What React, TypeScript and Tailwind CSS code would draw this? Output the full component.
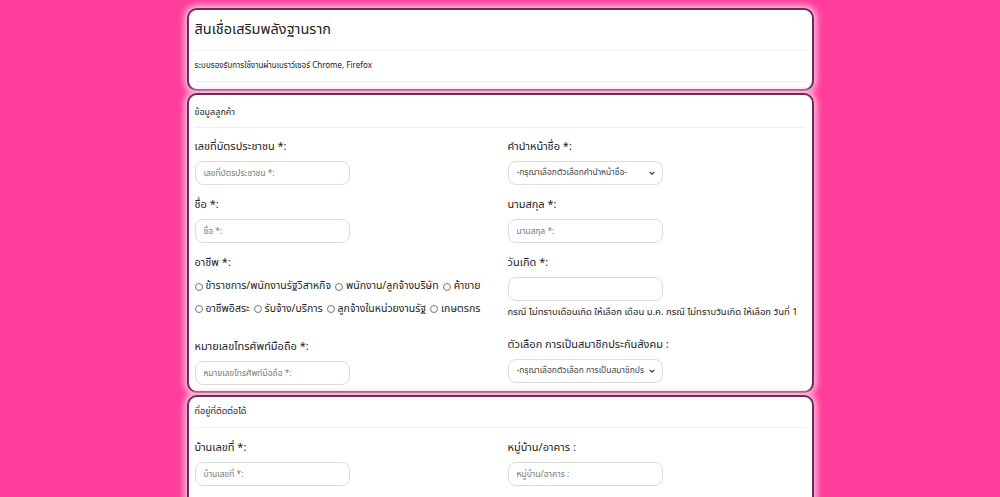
import React from 'react';

const font = { fontFamily: '"Noto Sans Thai", Tahoma, "DejaVu Sans", "Noto Sans", sans-serif' };

const cardCls =
  'bg-white border-2 border-[#6b2d57] rounded-[10px] shadow-[0_0_6px_3px_rgba(255,190,225,0.95)] px-[6px]';

const Hr = () => <div className="h-px bg-[#eeeeee]" />;

const TextField: React.FC<{ label: string; placeholder?: string }> = ({ label, placeholder }) => (
  <div className="flex flex-col">
    <label className="text-[11px] text-[#222] leading-[16px] h-[16px] whitespace-nowrap">{label}</label>
    <input
      placeholder={placeholder}
      className="mt-[6px] w-[155px] h-[24px] rounded-[8px] border border-[#dcdcdc] px-[8px] text-[8.5px] placeholder:text-[#777] outline-none"
    />
  </div>
);

const SelectField: React.FC<{ label: string; option: string }> = ({ label, option }) => (
  <div className="flex flex-col">
    <label className="text-[11px] text-[#222] leading-[16px] h-[16px] whitespace-nowrap">{label}</label>
    <div className="mt-[6px] w-[155px] h-[24px] rounded-[8px] border border-[#dcdcdc] pl-[8px] pr-[6px] flex items-center justify-between">
      <span className="text-[8.5px] text-[#444] whitespace-nowrap overflow-hidden">{option}</span>
      <svg width="8" height="8" viewBox="0 0 10 10" className="shrink-0 ml-1">
        <path d="M2 3.5 L5 6.5 L8 3.5" fill="none" stroke="#333" strokeWidth="1.4" />
      </svg>
    </div>
  </div>
);

const Radio: React.FC<{ label: string }> = ({ label }) => (
  <span className="inline-flex items-center gap-[3px] mr-[4px]">
    <span className="w-[8px] h-[8px] rounded-full border border-[#777] inline-block" />
    <span>{label}</span>
  </span>
);

const App: React.FC = () => {
  return (
    <div className="h-screen w-full bg-[#ff3d9a] flex justify-center overflow-hidden" style={font}>
      <div className="w-[627px] pt-[8px] flex flex-col gap-[2px]">
        <section className={cardCls + ' h-[83px] shrink-0'}>
          <h1 className="text-[14.5px] text-[#222] leading-[20px] pt-[10px] pb-[10px]">
            สินเชื่อเสริมพลังฐานราก
          </h1>
          <Hr />
          <p className="text-[8px] text-[#222] leading-[12px] pt-[9px] pb-[9px]">
            ระบบรองรับการใช้งานผ่านเบราว์เซอร์ Chrome, Firefox
          </p>
          <Hr />
        </section>

        <section className={cardCls + ' h-[300px] shrink-0'}>
          <p className="text-[9px] text-[#222] leading-[14px] pt-[10px] pb-[8px]">ข้อมูลลูกค้า</p>
          <Hr />
          <div className="grid grid-cols-[313px_1fr] pt-[11px]">
            <div className="flex flex-col gap-[12px]">
              <TextField label="เลขที่บัตรประชาชน *:" placeholder="เลขที่บัตรประชาชน *:" />
              <TextField label="ชื่อ *:" placeholder="ชื่อ *:" />
              <div className="flex flex-col">
                <label className="text-[11px] text-[#222] leading-[16px] h-[16px]">อาชีพ *:</label>
                <div className="mt-[5px] text-[10.5px] text-[#222] leading-[21px]">
                  <div className="whitespace-nowrap">
                    <Radio label="ข้าราชการ/พนักงานรัฐวิสาหกิจ" />
                    <Radio label="พนักงาน/ลูกจ้างบริษัท" />
                    <Radio label="ค้าขาย" />
                  </div>
                  <div className="whitespace-nowrap">
                    <Radio label="อาชีพอิสระ" />
                    <Radio label="รับจ้าง/บริการ" />
                    <Radio label="ลูกจ้างในหน่วยงานรัฐ" />
                    <Radio label="เกษตรกร" />
                  </div>
                </div>
              </div>
              <div className="mt-[6px]">
                <TextField label="หมายเลขโทรศัพท์มือถือ *:" placeholder="หมายเลขโทรศัพท์มือถือ *:" />
              </div>
            </div>
            <div className="flex flex-col gap-[12px]">
              <SelectField label="คำนำหน้าชื่อ *:" option="-กรุณาเลือกตัวเลือกคำนำหน้าชื่อ-" />
              <TextField label="นามสกุล *:" placeholder="นามสกุล *:" />
              <div className="flex flex-col">
                <TextField label="วันเกิด *:" />
                <p className="mt-[3px] text-[9.5px] text-[#222] leading-[16px] whitespace-nowrap">
                  กรณี ไม่ทราบเดือนเกิด ให้เลือก เดือน ม.ค. กรณี ไม่ทราบวันเกิด ให้เลือก วันที่ 1
                </p>
              </div>
              <div className="mt-[5px]">
                <SelectField
                  label="ตัวเลือก การเป็นสมาชิกประกันสังคม :"
                  option="-กรุณาเลือกตัวเลือก การเป็นสมาชิกประกันสังคม-"
                />
              </div>
            </div>
          </div>
        </section>

        <section className={cardCls + ' h-[200px] shrink-0'}>
          <p className="text-[9px] text-[#222] leading-[14px] pt-[7px] pb-[9px]">ที่อยู่ที่ติดต่อได้</p>
          <Hr />
          <div className="grid grid-cols-[313px_1fr] pt-[12px]">
            <TextField label="บ้านเลขที่ *:" placeholder="บ้านเลขที่ *:" />
            <TextField label="หมู่บ้าน/อาคาร :" placeholder="หมู่บ้าน/อาคาร :" />
          </div>
        </section>
      </div>
    </div>
  );
};

export default App;
